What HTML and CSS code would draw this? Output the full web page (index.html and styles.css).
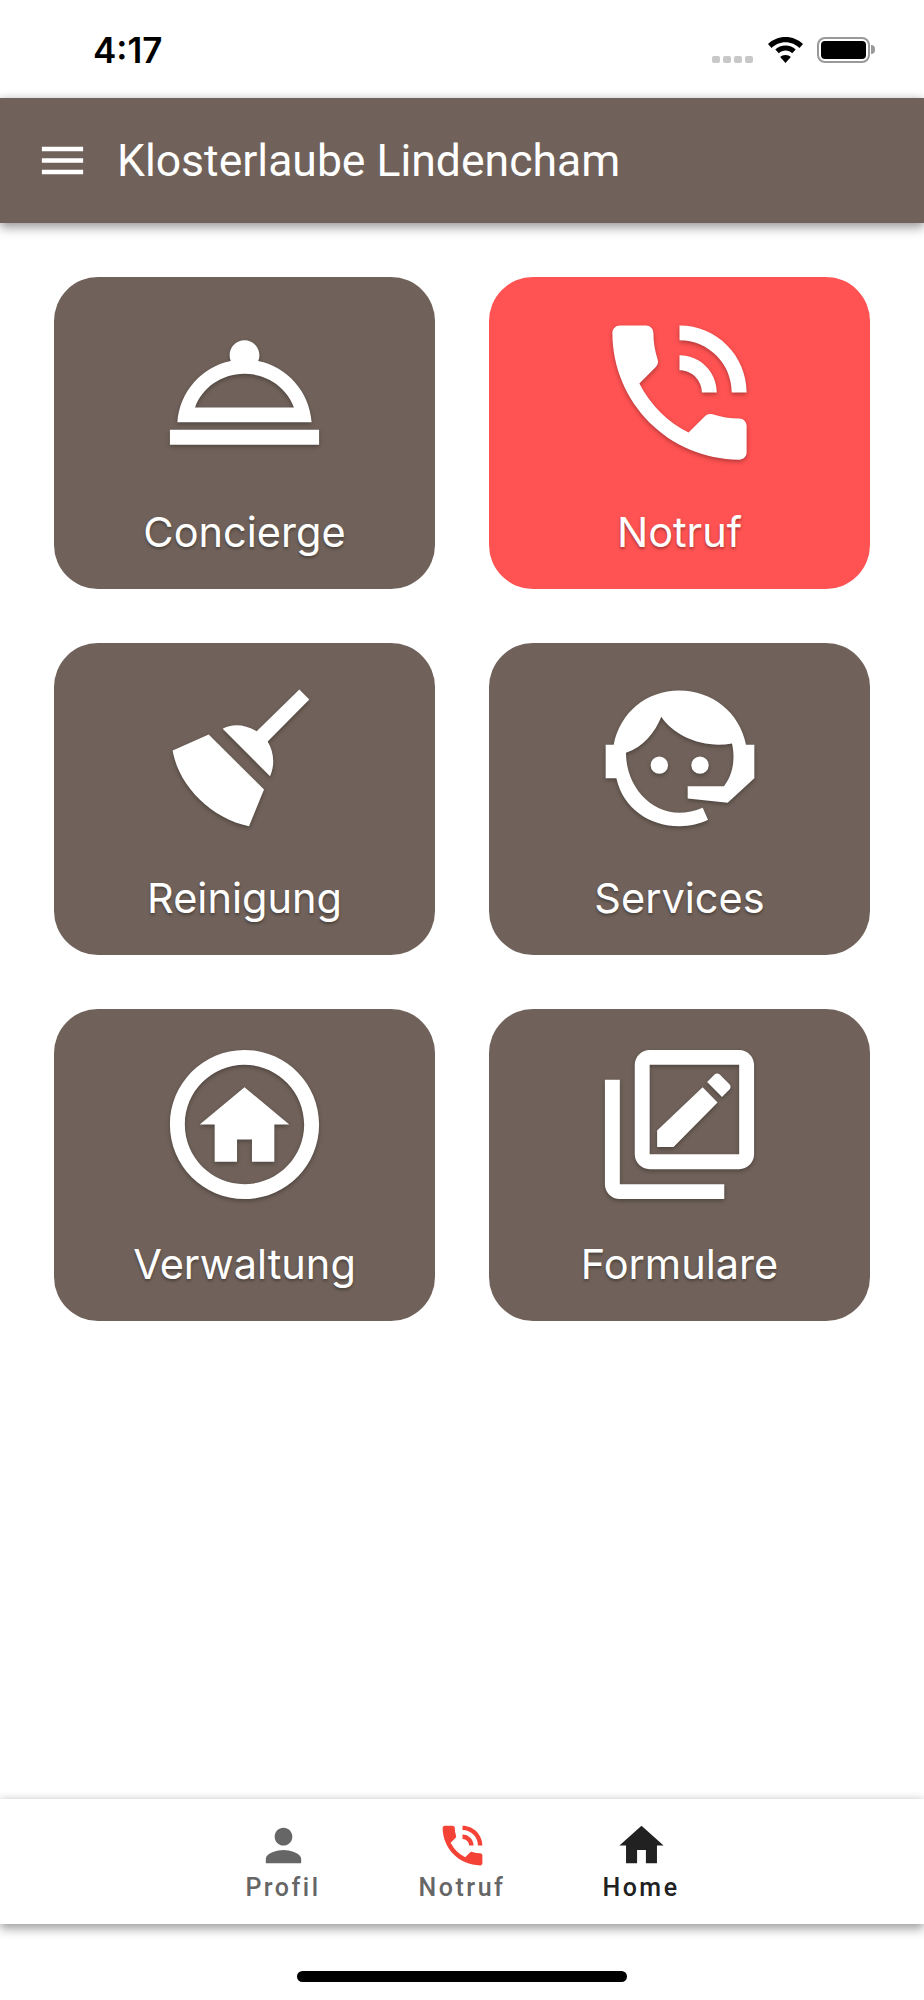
FILE: index.html
```html
<!DOCTYPE html>
<html lang="de">
<head>
    <meta charset="UTF-8">
    <meta name="viewport" content="width=device-width, initial-scale=1.0">
    <title>Klosterlaube Lindencham</title>
    <link rel="stylesheet" href="styles.css">
</head>
<body>
    <div class="app">
        <!-- Status bar -->
        <div class="status-bar">
            <span class="status-time">4:17</span>
            <div class="status-icons">
                <div class="signal"><i></i><i></i><i></i><i></i></div>
                <svg class="wifi" viewBox="0 0 35 26">
                    <path d="M17.500 0C24.500 0 30.500 2.700 35 7L31.500 11C28 7.500 23 5.200 17.500 5.200S7 7.500 3.500 11L0 7C4.500 2.700 10.500 0 17.500 0Z"/>
                    <path d="M17.500 8.500C21.500 8.500 25 10 27.700 12.500L24.200 16.200C22.400 14.600 20 13.600 17.500 13.600S12.600 14.600 10.800 16.200L7.300 12.500C10 10 13.500 8.500 17.500 8.500Z"/>
                    <path d="M17.500 18C19.800 18 21.600 18.800 22.800 20L17.500 26 12.200 20C13.400 18.800 15.200 18 17.500 18Z"/>
                </svg>
                <div class="battery"><div class="battery-fill"></div></div>
            </div>
        </div>

        <!-- App bar -->
        <header class="app-bar">
            <svg class="menu-icon" viewBox="0 0 24 24"><path d="M3 18h18v-2H3v2zm0-5h18v-2H3v2zm0-7v2h18V6H3z"/></svg>
            <h1 class="app-title">Klosterlaube Lindencham</h1>
        </header>

        <!-- Tiles -->
        <main class="tiles">
            <a class="tile">
                <svg class="tile-icon" viewBox="0 0 24 24"><path fill-rule="evenodd" d="M2 17h20v2H2zM13.840 7.790c.1-.24.16-.51.16-.79 0-1.100-.9-2-2-2s-2 .9-2 2c0 .28.06.55.16.79C6.250 8.600 3.270 11.930 3 16h18c-.27-4.070-3.250-7.400-7.160-8.210zM5.370 14C6.300 11.400 8.900 9.500 12 9.500s5.700 1.900 6.630 4.500z"/></svg>
                <span class="tile-label">Concierge</span>
            </a>
            <a class="tile tile-red">
                <svg class="tile-icon" viewBox="0 0 24 24"><path d="M20 15.500c-1.250 0-2.450-.2-3.570-.57-.35-.11-.74-.03-1.020.24l-2.200 2.200c-2.830-1.440-5.150-3.750-6.590-6.590l2.200-2.210c.28-.26.36-.65.25-1C8.700 6.450 8.500 5.250 8.500 4c0-.55-.45-1-1-1H4c-.55 0-1 .45-1 1 0 9.390 7.610 17 17 17 .55 0 1-.45 1-1v-3.500c0-.55-.45-1-1-1zM19 12h2c0-4.970-4.030-9-9-9v2c3.870 0 7 3.130 7 7zm-4 0h2c0-2.760-2.240-5-5-5v2c1.660 0 3 1.340 3 3z"/></svg>
                <span class="tile-label">Notruf</span>
            </a>
            <a class="tile">
                <svg class="tile-icon" viewBox="0 0 537 537">
                    <path d="M433 61.500L463 91.500 338 217.500C355 245 362 285 345 321.500L203 179.500C228 165 265 163 305 186.500Z"/>
                    <path d="M161 196.500L327 361.500 282 471.500C170 450 70 350 53 244.500Z"/>
                </svg>
                <span class="tile-label">Reinigung</span>
            </a>
            <a class="tile">
                <svg class="tile-icon" viewBox="0 0 537 537">
                    <path d="M71 227.500L47 227.500 47 327.500 79 327.500C100 420 180 471.500 268 471.500 300 471.500 330 465 354 452.500L338 416.500C315 427 290 431.500 268 431.500 180 431.500 108 350 108 251.500 160 235 195 190 214 143.500 250 200 340 240 426 223.500 436 270 430 315 402 351.500L293 351.500 293 388.500 413 401.500 493 327.500 493 227.500 468 227.500C450 130 365 64.500 268 64.500 170 64.500 90 130 71 227.500Z"/>
                    <circle cx="208" cy="288.500" r="26"/>
                    <circle cx="330" cy="288.500" r="26"/>
                </svg>
                <span class="tile-label">Services</span>
            </a>
            <a class="tile">
                <svg class="tile-icon" viewBox="0 0 24 24"><path d="M12 2C6.480 2 2 6.480 2 12s4.480 10 10 10 10-4.480 10-10S17.520 2 12 2zm0 18c-4.410 0-8-3.590-8-8s3.590-8 8-8 8 3.590 8 8-3.590 8-8 8z"/><path d="M11 17v-3h2v3h3v-5h2l-6-5-6 5h2v5z"/></svg>
                <span class="tile-label">Verwaltung</span>
            </a>
            <a class="tile">
                <svg class="tile-icon" viewBox="0 0 24 24"><path d="M4 6H2v14c0 1.100.9 2 2 2h14v-2H4V6zm16-4H8c-1.100 0-2 .9-2 2v12c0 1.100.9 2 2 2h12c1.100 0 2-.9 2-2V4c0-1.100-.9-2-2-2zm0 14H8V4h12v12z"/><path d="M9 12.800V15h2.200l5.900-5.950-2-2.050zM18.700 7.300c.2-.2.2-.5 0-.7l-1.300-1.300c-.2-.2-.5-.2-.7 0l-1 1 2 2z"/></svg>
                <span class="tile-label">Formulare</span>
            </a>
        </main>

        <!-- Bottom navigation -->
        <nav class="bottom-nav">
            <a class="nav-item">
                <svg class="nav-icon" viewBox="0 0 24 24"><path d="M12 12c2.210 0 4-1.790 4-4s-1.790-4-4-4-4 1.790-4 4 1.790 4 4 4zm0 2c-2.670 0-8 1.340-8 4v2h16v-2c0-2.660-5.330-4-8-4z"/></svg>
                <span>Profil</span>
            </a>
            <a class="nav-item nav-alert">
                <svg class="nav-icon" viewBox="0 0 24 24"><path d="M20 15.500c-1.250 0-2.450-.2-3.570-.57-.35-.11-.74-.03-1.020.24l-2.200 2.200c-2.830-1.440-5.150-3.750-6.590-6.590l2.200-2.210c.28-.26.36-.65.25-1C8.700 6.450 8.500 5.250 8.500 4c0-.55-.45-1-1-1H4c-.55 0-1 .45-1 1 0 9.390 7.610 17 17 17 .55 0 1-.45 1-1v-3.500c0-.55-.45-1-1-1zM19 12h2c0-4.970-4.030-9-9-9v2c3.870 0 7 3.130 7 7zm-4 0h2c0-2.760-2.240-5-5-5v2c1.660 0 3 1.340 3 3z"/></svg>
                <span>Notruf</span>
            </a>
            <a class="nav-item nav-active">
                <svg class="nav-icon" viewBox="0 0 24 24"><path d="M10 20v-6h4v6h5v-8h3L12 3 2 12h3v8z"/></svg>
                <span>Home</span>
            </a>
        </nav>

        <div class="home-area"><div class="home-indicator"></div></div>
    </div>
</body>
</html>
```

FILE: styles.css
```css
* {
    box-sizing: border-box;
}
body {
    margin: 0;
    background: #fff;
    font-family: Roboto, "Liberation Sans", sans-serif;
}
.app {
    width: 924px;
    height: 2000px;
    display: flex;
    flex-direction: column;
    overflow: hidden;
}

/* status bar */
.status-bar {
    height: 98px;
    flex: none;
    display: flex;
    justify-content: space-between;
    align-items: center;
    padding: 2px 54px 0 93px;
}
.status-time {
    font-family: Inter, sans-serif;
    font-size: 35px;
    font-weight: 600;
    color: #000;
}
.status-icons {
    display: flex;
    align-items: flex-end;
}
.signal {
    display: flex;
    gap: 3px;
    margin-right: 15px;
}
.signal i {
    width: 8px;
    height: 7px;
    border-radius: 2px;
    background: #c8c8c8;
}
.wifi {
    width: 35px;
    height: 26px;
    fill: #000;
    margin-right: 14px;
}
.battery {
    position: relative;
    width: 53px;
    height: 26px;
    padding: 2px;
    border: 2.5px solid #999;
    border-radius: 8px;
}
.battery:after {
    content: "";
    position: absolute;
    right: -7px;
    top: 6px;
    width: 4px;
    height: 9px;
    border-radius: 0 4px 4px 0;
    background: #999;
}
.battery-fill {
    height: 100%;
    border-radius: 4px;
    background: #000;
}

/* app bar */
.app-bar {
    height: 125px;
    flex: none;
    display: flex;
    align-items: center;
    background: #70625a;
    box-shadow: 0 5px 10px rgba(0, 0, 0, .35), 0 -1px 8px rgba(0, 0, 0, .12);
    position: relative;
}
.menu-icon {
    width: 55px;
    height: 55px;
    margin-left: 35px;
    fill: #fff;
}
.app-title {
    margin: 0 0 0 27px;
    font-size: 44.500px;
    font-weight: 400;
    color: #fff;
}

/* tiles */
.tiles {
    flex: 1;
    display: grid;
    grid-template-columns: 1fr 1fr;
    grid-auto-rows: 312px;
    gap: 54px;
    padding: 54px;
    align-content: start;
}
.tile {
    display: flex;
    flex-direction: column;
    align-items: center;
    padding-top: 26px;
    border-radius: 44px;
    background: #70625a;
    color: #fff;
}
.tile-red {
    background: #ff5252;
}
.tile-icon {
    width: 179px;
    height: 179px;
    fill: #fff;
    filter: drop-shadow(0 2px 2px rgba(0, 0, 0, .3));
}
.tile-label {
    margin-top: 26px;
    font-family: Inter, sans-serif;
    font-size: 41.500px;
    line-height: 48px;
    text-shadow: 0 2px 3px rgba(0, 0, 0, .35);
}

/* bottom nav */
.bottom-nav {
    height: 125px;
    flex: none;
    display: flex;
    justify-content: center;
    background: #fff;
    box-shadow: 0 5px 10px rgba(0, 0, 0, .35), 0 -1px 8px rgba(0, 0, 0, .1);
    position: relative;
}
.nav-item {
    width: 179px;
    padding-top: 20px;
    display: flex;
    flex-direction: column;
    align-items: center;
    font-size: 25px;
    line-height: 32px;
    font-weight: 500;
    letter-spacing: 2.500px;
    font-variant-ligatures: common-ligatures;
    color: #666;
    fill: #666;
}
.nav-icon {
    width: 53px;
    height: 53px;
}
.nav-alert .nav-icon {
    fill: #f44336;
}
.nav-active {
    color: #212121;
    fill: #212121;
}

/* home indicator */
.home-area {
    flex: none;
    height: 76px;
    display: flex;
    justify-content: center;
    padding-top: 47px;
}
.home-indicator {
    width: 330px;
    height: 11px;
    border-radius: 6px;
    background: #000;
}
```
